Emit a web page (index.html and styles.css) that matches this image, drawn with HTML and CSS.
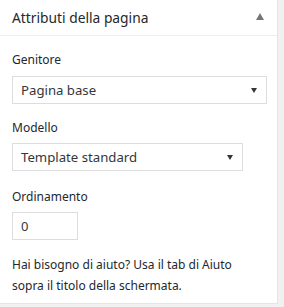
FILE: index.html
```html
<!DOCTYPE html>
<html lang="it">
<head>
    <meta charset="UTF-8">
    <title>Attributi della pagina</title>
    <link rel="stylesheet" href="styles.css">
</head>
<body>
    <div class="postbox">
        <div class="hndle">
            <h2>Attributi della pagina</h2>
            <span class="toggle-indicator"></span>
        </div>
        <div class="inside">
            <p class="attr-label first">Genitore</p>
            <div class="select wide">
                <span>Pagina base</span>
                <span class="arrow"></span>
            </div>

            <p class="attr-label">Modello</p>
            <div class="select medium">
                <span>Template standard</span>
                <span class="arrow"></span>
            </div>

            <p class="attr-label order">Ordinamento</p>
            <div class="text-input">0</div>

            <p class="help">Hai bisogno di aiuto? Usa il tab di Aiuto sopra il titolo della schermata.</p>
        </div>
    </div>
</body>
</html>
```

FILE: styles.css
```css
body {
    margin: 0;
    background-color: #f1f1f1;
    font-family: 'Noto Sans', 'Open Sans', sans-serif;
    color: #23282d;
    font-size: 12px;
}
.postbox {
    width: 277px;
    height: 303px;
    background-color: #fff;
    border-right: 1px solid #e5e5e5;
    border-bottom: 1px solid #e5e5e5;
}
.hndle {
    display: flex;
    align-items: center;
    justify-content: space-between;
    height: 35px;
    padding: 0 12px;
    border-bottom: 1px solid #eee;
}
.hndle h2 {
    margin: 0;
    font-size: 13.8px;
    font-weight: 400;
    color: #23282d;
}
.toggle-indicator {
    width: 0;
    height: 0;
    margin: 0 1px 2px 0;
    border-left: 4px solid transparent;
    border-right: 4px solid transparent;
    border-bottom: 7px solid #72777c;
}
.inside {
    padding: 4px 12px 12px;
}
.attr-label {
    margin: 15px 0 6px;
    line-height: 18px;
}
.attr-label.first {
    margin: 11px 0 7px;
}
.attr-label.order {
    margin: 17px 0 6px;
}
.select {
    display: flex;
    align-items: center;
    justify-content: space-between;
    box-sizing: border-box;
    height: 28px;
    padding: 0 9px 0 8px;
    border: 1px solid #ddd;
    font-size: 13.2px;
    color: #32373c;
}
.select.wide {
    width: 255px;
}
.select.medium {
    width: 231px;
}
.arrow {
    width: 0;
    height: 0;
    border-left: 3px solid transparent;
    border-right: 3px solid transparent;
    border-top: 5px solid #32373c;
}
.text-input {
    box-sizing: border-box;
    width: 66px;
    height: 28px;
    padding: 0 8px;
    border: 1px solid #ddd;
    font-size: 13px;
    line-height: 26px;
    color: #32373c;
}
.help {
    margin: 14px 0 0;
    line-height: 21px;
}
```
